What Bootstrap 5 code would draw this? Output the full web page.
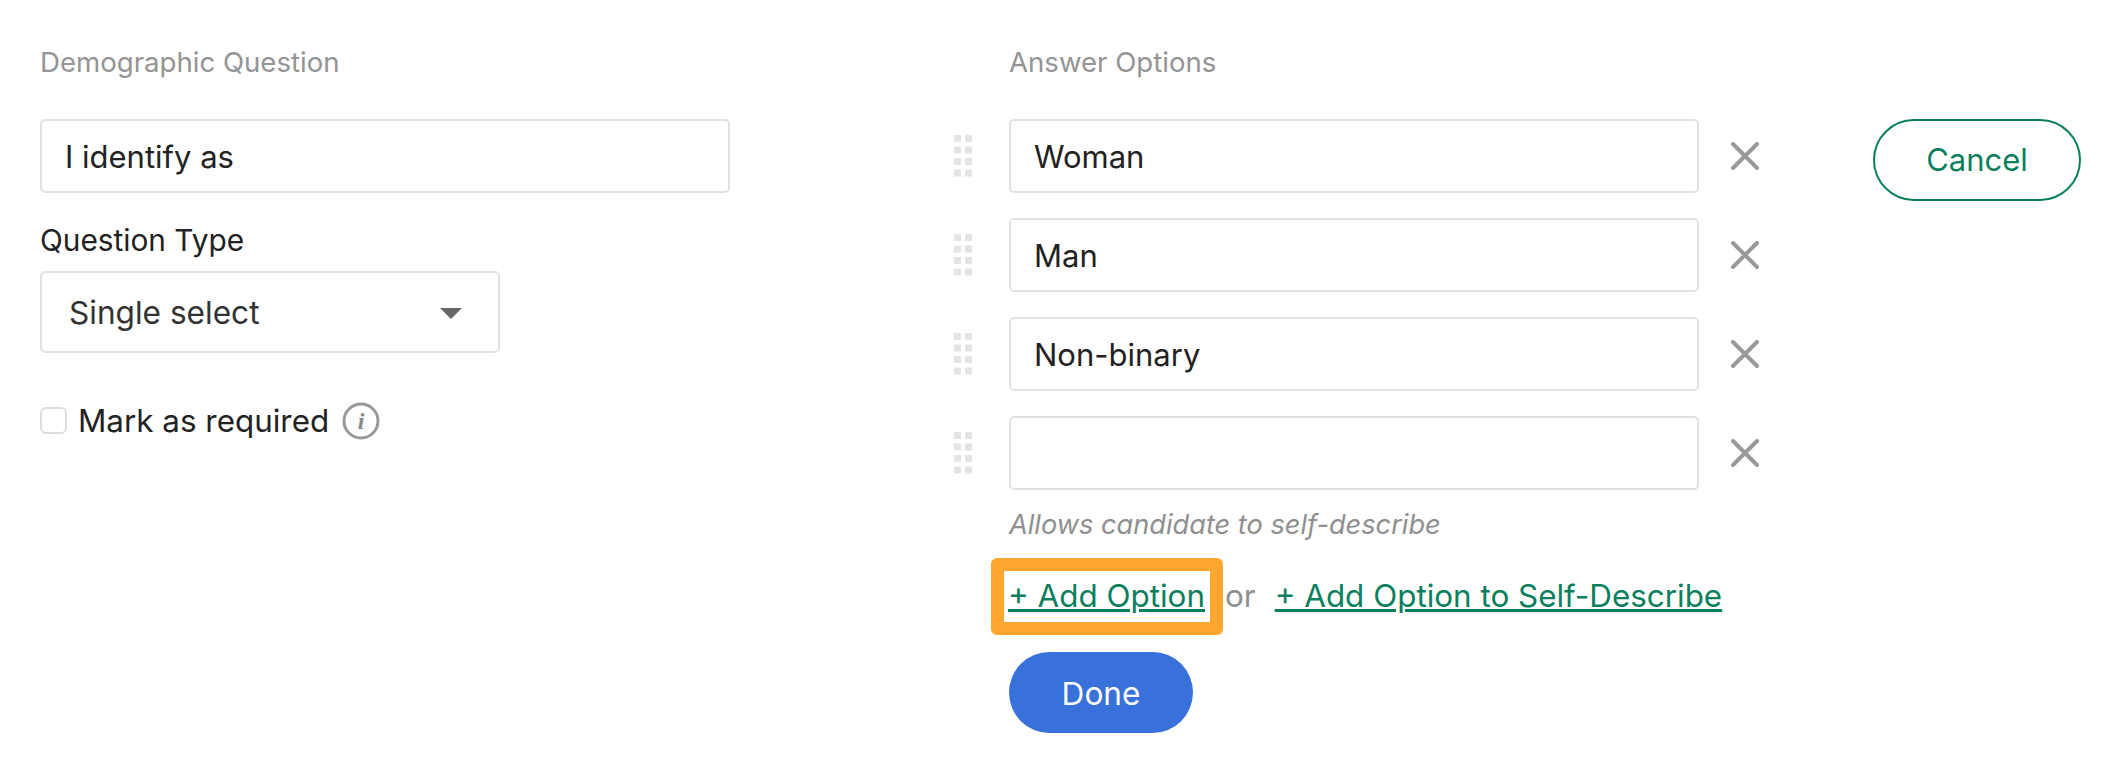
<!DOCTYPE html>
<html lang="en">
<head>
  <meta charset="UTF-8" />
  <title>Demographic Question</title>
  <link href="https://cdn.jsdelivr.net/npm/bootstrap@5.3.0/dist/css/bootstrap.min.css" rel="stylesheet" />
  <style>
    body { background: #fff; color: #222; font-family: "Inter", "Liberation Sans", sans-serif; font-size: 31px; }
    .page-wrap { padding: 42px 0 0 40px; }
    .left-col { width: 690px; }
    .answers-col { margin-left: 224px; }
    .field-head { font-size: 27.6px; line-height: 40px; color: #949494; margin-bottom: 37px; }
    .answers-col .field-head { margin-left: 55px; }
    .text-field.form-control { height: 74px; border: 2px solid #e2e2e2; border-radius: 5px; padding: 0 23px; font-size: 31px; color: #222; }
    .field-label { font-size: 29.8px; line-height: 40px; margin: 27px 0 11px; display: block; }
    .type-select.btn { width: 460px; height: 82px; padding: 2px 36px 0 27px; border: 2px solid #e2e2e2; border-radius: 5px; font-size: 31.6px; color: #333; background: #fff; }
    .type-select.dropdown-toggle::after { border-top: 11px solid #666; border-left: 11px solid transparent; border-right: 11px solid transparent; border-bottom: 0; margin: 0; }
    .required-row { margin-top: 49px; height: 40px; font-size: 31.4px; }
    .required-row .form-check-input { width: 27px; height: 27px; margin: -4px 11px 0 0; border: 2px solid #ddd; border-radius: 6px; }
    .required-row .info-ico { margin-left: 13px; margin-top: -2px; }
    .answer-row { width: 805px; }
    .answer-row + .answer-row { margin-top: 25px; }
    .answer-row .grip { margin-right: 37px; flex: none; }
    .answer-row .text-field { width: 690px; flex: none; }
    .answer-row .del-ico { margin-left: 32px; flex: none; }
    .hint-line { font-size: 27.2px; line-height: 36px; font-style: italic; color: #8f8f8f; margin: 17px 0 15px 55px; }
    .links-line { margin-left: 37px; height: 77px; font-size: 31.4px; }
    .focus-box { border: 13px solid #ffa62e; border-radius: 6px; padding: 0 5px 0 4px; height: 77px; }
    .green-link { color: #0a7f5e; }
    .or-word { color: #8f8f8f; margin: 0 19px 0 2px; }
    .done-btn.btn { margin: 17px 0 0 55px; width: 184px; height: 81px; border-radius: 41px; background: #3871d9; border: 0; color: #fff; font-size: 31.6px; padding: 2px 0 0; }
    .cancel-btn.btn { margin: 77px 0 0 114px; width: 208px; height: 82px; border-radius: 41px; background: #fff; border: 2px solid #0a7f5e; color: #0a7f5e; font-size: 31px; padding: 0; }
  </style>
</head>
<body>
  <div class="d-flex align-items-start page-wrap">

    <div class="left-col">
      <div class="field-head">Demographic Question</div>
      <input type="text" class="form-control text-field" value="I identify as">
      <label class="field-label">Question Type</label>
      <button type="button" class="btn dropdown-toggle type-select d-flex align-items-center justify-content-between">Single select</button>
      <div class="d-flex align-items-center required-row">
        <input class="form-check-input" type="checkbox" id="required">
        <label for="required">Mark as required</label>
        <svg class="info-ico" width="38" height="38" viewBox="0 0 38 38">
          <circle cx="19" cy="19" r="17" fill="none" stroke="#999" stroke-width="3" />
          <text x="19" y="27" text-anchor="middle" font-family="Liberation Serif" font-style="italic" font-weight="bold" font-size="24" fill="#888">i</text>
        </svg>
      </div>
    </div>

    <div class="answers-col">
      <div class="field-head">Answer Options</div>
      <div id="answers"></div>
      <div class="hint-line">Allows candidate to self-describe</div>
      <div class="d-flex align-items-center links-line">
        <span class="focus-box d-flex align-items-center"><a href="#" class="green-link">+ Add Option</a></span>
        <span class="or-word">or</span>
        <a href="#" class="green-link">+ Add Option to Self-Describe</a>
      </div>
      <button type="button" class="btn done-btn">Done</button>
    </div>

    <button type="button" class="btn cancel-btn">Cancel</button>
  </div>

  <script>
    const opciones = ["Woman", "Man", "Non-binary", ""];
    const grip = '<svg class="grip" width="18" height="42" viewBox="0 0 18 42" fill="#e4e4e4">' +
      [0, 11.5, 23, 34.5].map(y => `<rect x="0" y="${y}" width="7" height="7"/><rect x="11" y="${y}" width="7" height="7"/>`).join("") +
      '</svg>';
    const del = '<svg class="del-ico" width="28" height="28" viewBox="0 0 28 28" stroke="#999" stroke-width="4" stroke-linecap="round"><path d="M2 2 26 26M26 2 2 26"/></svg>';
    const answers = document.getElementById("answers");
    opciones.forEach(o => {
      const row = document.createElement("div");
      row.className = "d-flex align-items-center answer-row";
      row.innerHTML = `${grip}<input type="text" class="form-control text-field" value="${o}">${del}`;
      answers.appendChild(row);
    });
  </script>
  <script src="https://cdn.jsdelivr.net/npm/bootstrap@5.3.0/dist/js/bootstrap.bundle.min.js"></script>
</body>
</html>
